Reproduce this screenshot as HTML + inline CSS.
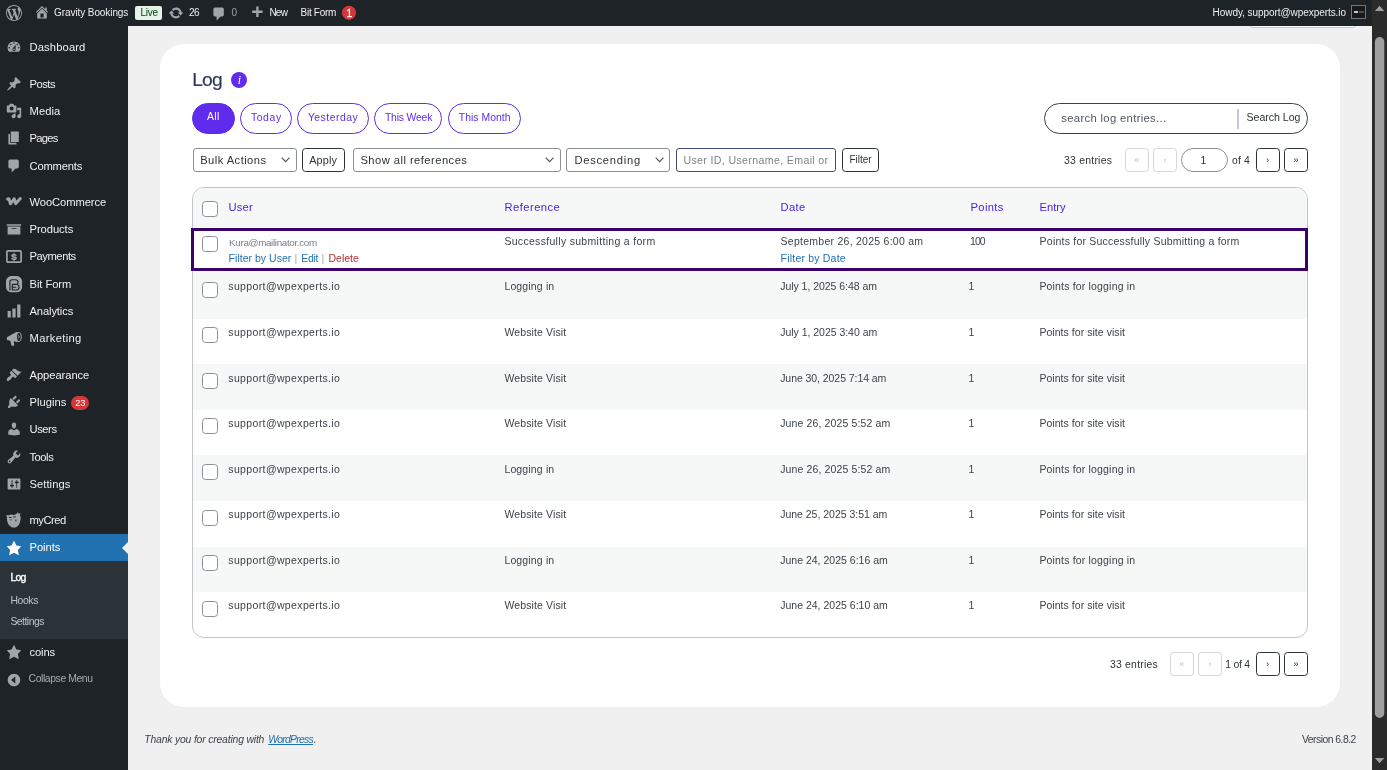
<!DOCTYPE html>
<html lang="en"><head><meta charset="utf-8"><title>Log ‹ Gravity Bookings — WordPress</title>
<style>
html,body{margin:0;padding:0;}
body{width:1387px;height:770px;overflow:hidden;background:#f0f0f1;position:relative;font-family:"Liberation Sans",sans-serif;}
.a{position:absolute;box-sizing:border-box;}
#adminbar{left:0;top:0;width:1372px;height:26px;background:#1d2327;}
#sidebar{left:0;top:26px;width:128px;height:744px;background:#1d2327;}
#active{left:0;top:534px;width:128px;height:27px;background:#2271b1;}
#submenu{left:0;top:561px;width:128px;height:78px;background:#2c3338;}
#notch{left:122px;top:541.5px;width:0;height:0;border-top:6px solid transparent;border-bottom:6px solid transparent;border-right:6px solid #f0f0f1;}
#card{left:160px;top:44px;width:1180px;height:663px;background:#fff;border-radius:24px;}
#sotab{left:1249.5px;top:20px;width:106px;height:8px;background:#fff;border:1px solid #c3c4c7;border-radius:0 0 3px 3px;}
#sbtrack{left:1372px;top:0;width:15px;height:770px;background:#2b2b2b;}
.pill{border:1px solid #5f2ced;border-radius:16px;height:31px;top:103px;background:#fff;}
.pill.on{background:#5f2ced;}
.sel{border:1px solid #8c8f94;border-radius:3px;background:#fff;height:23.5px;top:148.3px;}
.btn{border:1px solid #2c3338;border-radius:3.5px;background:#fff;height:23.5px;top:148.3px;}
.btn.dis{border-color:#d5d6d8;}
.cb{width:16px;height:16px;border:1px solid #8c8f94;border-radius:3.5px;background:#fff;left:201.8px;}
#table{left:192px;top:187px;width:1116px;height:451px;border:1px solid #c3c4c7;border-radius:12px;background:#fff;overflow:hidden;}
.row{left:0;width:1116px;background:#f6f7f7;}
#hl{left:191px;top:228.3px;width:1117px;height:42.5px;border:3px solid #3c0069;background:#fff;}
svg.i{position:absolute;overflow:visible;}
.badge{background:#d63638;border-radius:7px;}
#all{position:absolute;left:0;top:0;width:1387px;height:770px;overflow:hidden;will-change:transform;}

.t{position:absolute;white-space:nowrap;line-height:1;font-family:"Liberation Sans", sans-serif;}
</style></head>
<body>
<div id="all">
<div id="adminbar" class="a"></div>
<div id="sidebar" class="a"></div>
<div id="active" class="a"></div>
<div id="submenu" class="a"></div>
<div id="notch" class="a"></div>
<div id="sotab" class="a"></div>
<div id="adminbar2" class="a" style="left:0;top:0;width:1372px;height:26px;background:#1d2327;"></div>
<div id="card" class="a"></div>
<div id="sbtrack" class="a"></div>
<svg class="i" style="left:1372px;top:0" width="15" height="770" viewBox="0 0 15 770"><rect x="2.900" y="37" width="9.400" height="681" rx="4.700" fill="#9f9f9f"/><path d="M2.900 10.900h9.400L7.600 5.700z" fill="#9f9f9f"/><path d="M2.900 758h9.400L7.600 763.200z" fill="#9f9f9f"/></svg>

<!-- admin bar widgets -->
<div class="a" style="left:135.2px;top:6.4px;width:27px;height:13.4px;background:#e5f2e7;border-radius:2px;"></div>
<svg class="i" style="left:341px;top:5px" width="16" height="16" viewBox="0 0 16 16"><circle cx="7.950" cy="7.850" r="7.050" fill="#d63638"/></svg>
<div class="a" style="left:1351px;top:5px;width:15px;height:14px;border:1px solid #74787d;background:#17191b;"></div>
<div class="a" style="left:1353.5px;top:10.6px;width:4px;height:2.4px;background:#c8c8c8;"></div>
<div class="a" style="left:1358.5px;top:11.2px;width:5px;height:1.4px;background:#4a4d50;"></div>
<!-- plugins badge -->
<div class="a badge" style="left:71.1px;top:396.3px;width:18px;height:13.4px;"></div>

<!-- ICONS -->
<svg class="i" style="left:6.40px;top:4.80px" width="16" height="16" viewBox="0 0 20 20"><path fill="#a0a5aa"  d="M20 10c0-5.510-4.490-10-10-10C4.480 0 0 4.490 0 10c0 5.520 4.480 10 10 10 5.510 0 10-4.480 10-10zM7.780 15.370L4.370 6.220c.55-.02 1.170-.08 1.170-.08.5-.06.44-1.130-.06-1.110 0 0-1.450.11-2.370.11-.18 0-.37 0-.58-.01C4.120 2.690 6.870 1.110 10 1.110c2.330 0 4.450.87 6.050 2.340-.68-.11-1.650.39-1.650 1.580 0 .74.45 1.360.9 2.100.35.61.55 1.360.55 2.460 0 1.490-1.400 5-1.400 5l-3.030-8.370c.54-.02.82-.17.82-.17.5-.05.44-1.250-.06-1.220 0 0-1.440.12-2.380.12-.87 0-2.330-.12-2.330-.12-.5-.03-.56 1.200-.06 1.220l.92.080 1.260 3.410zM17.410 10c.24-.64.74-1.870.43-4.250.7 1.290 1.050 2.710 1.050 4.250 0 3.290-1.730 6.240-4.400 7.780.97-2.590 1.940-5.200 2.920-7.780zM6.100 18.090C3.120 16.650 1.110 13.530 1.110 10c0-1.300.23-2.480.72-3.590C3.250 10.300 4.670 14.200 6.100 18.090zm4.030-6.630l2.580 6.980c-.86.29-1.760.45-2.710.45-.79 0-1.570-.11-2.290-.33.81-2.380 1.620-4.740 2.420-7.100z"/></svg>
<svg class="i" style="left:34.10px;top:4.30px" width="16" height="16" viewBox="0 0 20 20"><path fill="#a0a5aa"  d="M16 8.5l1.530 1.530-1.060 1.060L10 4.620l-6.470 6.470-1.060-1.060L10 2.500l4 4v-2h2v4zm-6-2.460l6 5.990V18H4v-5.970zM12 17v-5H8v5h4z"/></svg>
<svg class="i" style="left:168.00px;top:4.80px" width="16" height="16" viewBox="0 0 20 20"><path fill="#a0a5aa"  d="M10.2 3.28c3.530 0 6.430 2.610 6.920 6h2.080l-3.500 4-3.500-4h2.320c-.45-1.970-2.210-3.450-4.320-3.450-1.450 0-2.730.71-3.540 1.780L4.950 5.660C6.230 4.200 8.110 3.280 10.200 3.280zm-.4 13.440c-3.520 0-6.430-2.610-6.920-6H.8l3.500-4c1.170 1.330 2.330 2.670 3.500 4H5.480c.45 1.970 2.210 3.450 4.320 3.450 1.450 0 2.730-.71 3.540-1.780l1.710 1.950c-1.280 1.460-3.150 2.380-5.250 2.380z"/></svg>
<svg class="i" style="left:210.60px;top:5.60px" width="16" height="16" viewBox="0 0 20 20"><path fill="#a0a5aa"  d="M5 2h9c1.1 0 2 .9 2 2v7c0 1.1-.9 2-2 2h-2l-5 5v-5H5c-1.1 0-2-.9-2-2V4c0-1.1.9-2 2-2z"/></svg>
<svg class="i" style="left:248.90px;top:4.80px" width="16" height="16" viewBox="0 0 20 20"><path fill="#a0a5aa"  d="M17 7v3h-5v5H9v-5H4V7h5V2h3v5h5z"/></svg>
<svg class="i" style="left:6.00px;top:39.30px" width="16" height="16" viewBox="0 0 20 20"><path fill="#a0a5aa"  d="M3.76 16h12.48c1.1-1.37 1.76-3.11 1.76-5 0-4.42-3.58-8-8-8s-8 3.58-8 8c0 1.89.66 3.63 1.76 5zM10 4c.55 0 1 .45 1 1s-.45 1-1 1-1-.45-1-1 .45-1 1-1zM6 6c.55 0 1 .45 1 1s-.45 1-1 1-1-.45-1-1 .45-1 1-1zm8 0c.55 0 1 .45 1 1s-.45 1-1 1-1-.45-1-1 .45-1 1-1zm-5.37 5.55L12 7v6c0 1.1-.9 2-2 2s-2-.9-2-2c0-.57.24-1.08.63-1.45zM4 10c.55 0 1 .45 1 1s-.45 1-1 1-1-.45-1-1 .45-1 1-1zm12 0c.55 0 1 .45 1 1s-.45 1-1 1-1-.45-1-1 .45-1 1-1zm-5 3c0-.55-.45-1-1-1s-1 .45-1 1 .45 1 1 1 1-.45 1-1z"/></svg>
<svg class="i" style="left:6.00px;top:76.00px" width="16" height="16" viewBox="0 0 20 20"><path fill="#a0a5aa"  d="M10.44 3.02l1.82-1.82 6.36 6.35-1.83 1.82c-1.05-.68-2.48-.57-3.41.36l-.75.75c-.92.93-1.04 2.35-.35 3.41l-1.83 1.82-2.41-2.41-2.8 2.79c-.42.42-3.38 2.71-3.8 2.29s1.86-3.39 2.28-3.81l2.79-2.79L4.1 9.36l1.83-1.82c1.05.69 2.48.57 3.4-.36l.75-.75c.93-.92 1.05-2.35.36-3.41z"/></svg>
<svg class="i" style="left:6.00px;top:103.20px" width="16" height="16" viewBox="0 0 20 20"><path fill="#a0a5aa"  d="M13 11V4c0-.55-.45-1-1-1h-1.67L9 1H5L3.67 3H2c-.55 0-1 .45-1 1v7c0 .55.45 1 1 1h10c.55 0 1-.45 1-1zM7 4.5c1.38 0 2.5 1.12 2.5 2.5S8.38 9.5 7 9.5 4.5 8.38 4.5 7 5.62 4.5 7 4.5zM14 6h5v10.5c0 1.38-1.12 2.5-2.5 2.5S14 17.880 14 16.5s1.12-2.5 2.5-2.5c.17 0 .34.02.5.05V9h-3V6zm-4 8.050V13h2v3.500c0 1.380-1.120 2.500-2.500 2.500S7 17.880 7 16.500 8.120 14 9.500 14c.17 0 .34.020.5.050z"/></svg>
<svg class="i" style="left:6.00px;top:130.40px" width="16" height="16" viewBox="0 0 20 20"><path fill="#a0a5aa"  d="M6 15V2h10v13H6zm-1 1h8v2H3V5h2v11z"/></svg>
<svg class="i" style="left:6.00px;top:158.30px" width="16" height="16" viewBox="0 0 20 20"><path fill="#a0a5aa"  d="M5 2h9c1.1 0 2 .9 2 2v7c0 1.1-.9 2-2 2h-2l-5 5v-5H5c-1.1 0-2-.9-2-2V4c0-1.1.9-2 2-2z"/></svg>
<svg class="i" style="left:6.00px;top:221.40px" width="16" height="16" viewBox="0 0 20 20"><path fill="#a0a5aa"  d="M19 4v2H1V4h18zM2 7h16v10H2V7zm11 3V9H7v1h6z"/></svg>
<svg class="i" style="left:6.00px;top:303.00px" width="16" height="16" viewBox="0 0 20 20"><path fill="#a0a5aa"  d="M18 18V2h-4v16h4zm-6 0V7H8v11h4zm-6 0v-8H2v8h4z"/></svg>
<svg class="i" style="left:6.00px;top:367.00px" width="16" height="16" viewBox="0 0 20 20"><path fill="#a0a5aa"  d="M14.48 11.06L7.41 3.99l1.5-1.5c.5-.56 2.3-.47 3.51.32 1.21.8 1.43 1.28 2.91 2.1 1.18.64 2.45 1.26 4.45.85zm-.71.71L6.7 4.7 4.93 6.47c-.39.39-.39 1.02 0 1.41l1.06 1.060c.39.39.39 1.030 0 1.420-.6.6-1.430 1.110-2.210 1.690-.35.26-.7.530-1.010.840C1.430 14.230.4 16.080 1.400 17.070c.99 1 2.840-.030 4.180-1.360.31-.31.580-.660.850-1.020.57-.78 1.080-1.610 1.690-2.210.39-.39 1.020-.39 1.410 0l1.060 1.060c.39.39 1.020.39 1.410 0z"/></svg>
<svg class="i" style="left:6.00px;top:394.40px" width="16" height="16" viewBox="0 0 20 20"><path fill="#a0a5aa"  d="M13.11 4.36L9.87 7.6 8 5.73l3.24-3.24c.35-.34 1.05-.2 1.56.32.52.51.66 1.21.31 1.55zm-8 1.770l.91-1.120 9.010 9.010-1.190.840c-.71.71-2.630 1.160-3.820 1.160H6.140L4.900 17.260c-.59.59-1.540.59-2.120 0-.59-.58-.59-1.530 0-2.120L4 13.900V10.020c0-1.190.45-3.090 1.110-3.890zm7.260 3.970l3.240-3.240c.34-.35 1.040-.21 1.550.31.52.51.66 1.210.31 1.550l-3.240 3.250z"/></svg>
<svg class="i" style="left:6.00px;top:421.40px" width="16" height="16" viewBox="0 0 20 20"><path fill="#a0a5aa"  d="M10 9.25c-2.27 0-2.730-3.440-2.730-3.440C7 4.020 7.820 2 9.970 2c2.160 0 2.980 2.020 2.710 3.810 0 0-.41 3.440-2.680 3.440zm0 2.570L12.720 10c2.390 0 4.520 2.330 4.520 4.530v2.490s-3.650 1.130-7.240 1.130c-3.650 0-7.240-1.130-7.240-1.130v-2.490c0-2.250 1.940-4.480 4.470-4.480z"/></svg>
<svg class="i" style="left:6.00px;top:448.80px" width="16" height="16" viewBox="0 0 20 20"><path fill="#a0a5aa"  d="M16.68 9.77c-1.34 1.34-3.300 1.670-4.950.99l-5.410 6.520c-.99.99-2.590.99-3.580 0s-.99-2.590 0-3.570l6.520-5.420c-.68-1.650-.35-3.610.99-4.950 1.280-1.280 3.120-1.620 4.720-1.060l-2.890 2.890 2.820 2.820 2.860-2.870c.53 1.580.18 3.390-1.080 4.650zM3.810 16.210c.4.39 1.040.39 1.430 0 .4-.4.400-1.040 0-1.430-.39-.4-1.030-.4-1.430 0-.39.39-.39 1.030 0 1.430z"/></svg>
<svg class="i" style="left:6.00px;top:476.00px" width="16" height="16" viewBox="0 0 20 20"><path fill="#a0a5aa"  d="M18 16V4c0-.55-.45-1-1-1H3c-.55 0-1 .45-1 1v12c0 .55.45 1 1 1h14c.55 0 1-.45 1-1zM8 11h1c.55 0 1 .45 1 1s-.45 1-1 1H8v1.500c0 .28-.22.5-.5.5s-.5-.22-.5-.5V13H6c-.55 0-1-.45-1-1s.45-1 1-1h1V5.500c0-.28.22-.5.5-.5s.5.220.5.500V11zm5-2h-1c-.55 0-1-.45-1-1s.45-1 1-1h1V5.500c0-.28.220-.5.500-.5s.500.220.500.500V7h1c.55 0 1 .45 1 1s-.45 1-1 1h-1v5.500c0 .28-.220.500-.500.500s-.500-.220-.500-.500V9z"/></svg>
<svg class="i" style="left:6.00px;top:540.40px" width="16" height="16" viewBox="0 0 20 20"><path fill="#fff"  d="M10 1l3 6 6 .75-4.12 4.620L16 19l-6-3-6 3 1.130-6.630L1 7.750 7 7z"/></svg>
<svg class="i" style="left:6.00px;top:644.40px" width="16" height="16" viewBox="0 0 20 20"><path fill="#a0a5aa"  d="M10 1l3 6 6 .75-4.12 4.620L16 19l-6-3-6 3 1.130-6.630L1 7.750 7 7z"/></svg>
<svg class="i" style="left:6.00px;top:672.40px" width="16" height="16" viewBox="0 0 20 20"><path fill="#a0a5aa"  d="M10 2.160c4.330 0 7.840 3.510 7.840 7.840s-3.510 7.840-7.840 7.840S2.160 14.330 2.160 10 5.670 2.160 10 2.160zM11.600 14.320V5.680L6.400 10z"/></svg>
<svg class="i" style="left:5.8px;top:196.9px" width="16" height="9" viewBox="0 0 16 9"><path fill="none" stroke="#a0a5aa" stroke-width="3" stroke-linecap="round" stroke-linejoin="round" d="M1.600 2.200c.6-.7 1.500-.6 1.700.3l1.100 4.300L8.200 1.800l1.400 4.900 4.700-5.200"/></svg>
<svg class="i" style="left:5.8px;top:250px" width="16" height="13" viewBox="0 0 16 13"><rect x=".9" y=".9" width="14.200" height="11.200" rx="1" fill="none" stroke="#a0a5aa" stroke-width="1.700"/><text x="8" y="10.100" text-anchor="middle" font-family="Liberation Sans, sans-serif" font-weight="700" font-size="9.800" fill="#a0a5aa" stroke="#a0a5aa" stroke-width=".4">$</text></svg>
<svg class="i" style="left:6px;top:275.700px" width="16.100" height="16.300" viewBox="0 0 16 16"><rect width="16" height="16" rx="5.200" fill="#a0a5aa"/><path d="M3.900 13.800V5.700c0-1.200.9-2.100 2.100-2.100h3.300c1.600 0 2.700 1 2.700 2.400 0 1-.6 1.800-1.400 2.100 1.500.3 2.400 1.400 2.400 2.900 0 1.700-1.300 2.800-3.100 2.800H6.300V8.300h3.300M6.300 11.100h3.500" fill="none" stroke="#1d2327" stroke-width="1.150" stroke-linecap="round" stroke-linejoin="round"/></svg>
<svg class="i" style="left:6px;top:331px" width="16" height="16" viewBox="0 0 16 16"><path fill="#a0a5aa" d="M.9 6.300L9.800 1.300c1.200-.5 2.200-.5 2.900-.2v9.800c-.7.300-1.700.1-2.900-.2l-2.100-.4.600 3.800c0 .4-.2.700-.6.700H6c-.3 0-.5-.2-.6-.5L4.300 9.800.9 9.100z"/><ellipse cx="12.900" cy="6" rx="2.300" ry="4.500" fill="#1d2327" stroke="#a0a5aa" stroke-width="1"/><path d="M12.300 4.300c.9.300.9 2.600 0 3.200" fill="none" stroke="#a0a5aa" stroke-width=".9"/></svg>
<svg class="i" style="left:6.400px;top:512.300px" width="15.600" height="16.500" viewBox="0 0 15 16" preserveAspectRatio="none"><path fill="#a0a5aa" d="M.5 2.800l2.200.3 2.300-.7 2.600.5 2.300-.9 1.600-1.700.6 1.500 2-.6-.8 2.500c.7.500 1 1.200.9 2.100l-.5 2.900c-.3 2.300-1.500 4.400-3.300 5.600-1.500 1-3.700 1.100-5.300.3C2.900 13.400 1.500 11.200 1.200 8.800z"/><path d="M2.800 5.300h2.600M6.800 4.700h2.600M4.200 7.600h1.200M9.500 7.300v2M5.500 11.700h.1M6.900 12.500h.1" stroke="#1d2327" stroke-width=".9" fill="none"/></svg>

<!-- title info circle -->
<div class="a" style="left:231.2px;top:71.9px;width:16px;height:16px;border-radius:8px;background:#5f2ced;"></div>

<!-- pills -->
<div class="a pill on" style="left:192px;width:42.6px;"></div>
<div class="a pill" style="left:240px;width:51.6px;"></div>
<div class="a pill" style="left:297px;width:71.8px;"></div>
<div class="a pill" style="left:374.2px;width:68.3px;"></div>
<div class="a pill" style="left:448px;width:72.6px;"></div>

<!-- search -->
<div class="a" style="left:1044px;top:103px;width:264px;height:31px;border:1px solid #3c434a;border-radius:16px;background:#fff;"></div>
<div class="a" style="left:1237.4px;top:109px;width:1.2px;height:20px;background:#c9c2ea;"></div>

<!-- filter row -->
<div class="a sel" style="left:193px;width:103.6px;"></div>
<div class="a btn" style="left:302px;width:42.8px;"></div>
<div class="a sel" style="left:353px;width:207.8px;"></div>
<div class="a sel" style="left:566px;width:103.6px;"></div>
<div class="a sel" style="left:676.3px;width:159.6px;border-color:#3f4c7c;overflow:hidden;"><span style="position:absolute;left:6.1px;top:6.2px;font-size:10.6px;line-height:1;color:#7e8389;white-space:nowrap;letter-spacing:0.36px;">User ID, Username, Email or Reference</span></div>
<div class="a" style="left:831px;top:150px;width:4px;height:20px;background:#fff;"></div>
<div class="a btn" style="left:842px;width:36.8px;"></div>
<!-- chevrons -->
<svg class="i" style="left:280.9px;top:157.4px" width="9.2" height="5.4" viewBox="0 0 9.2 5.4"><path d="M.7.7l3.9 3.9L8.5.7" fill="none" stroke="#50575e" stroke-width="1.2"/></svg>
<svg class="i" style="left:545.2px;top:157.4px" width="9.2" height="5.4" viewBox="0 0 9.2 5.4"><path d="M.7.7l3.9 3.9L8.5.7" fill="none" stroke="#50575e" stroke-width="1.2"/></svg>
<svg class="i" style="left:654.8px;top:157.4px" width="9.2" height="5.4" viewBox="0 0 9.2 5.4"><path d="M.7.7l3.9 3.9L8.5.7" fill="none" stroke="#50575e" stroke-width="1.2"/></svg>

<!-- top pagination -->
<div class="a btn dis" style="left:1125px;width:23.6px;"></div>
<div class="a btn dis" style="left:1153px;width:23.6px;"></div>
<div class="a" style="left:1181px;top:148.3px;width:46.8px;height:23.5px;border:1px solid #8c8f94;border-radius:12px;background:#fff;"></div>
<div class="a btn" style="left:1255.8px;width:24px;"></div>
<div class="a btn" style="left:1283.8px;width:24px;"></div>
<!-- bottom pagination -->
<div class="a btn dis" style="left:1170.2px;top:652.3px;width:23.4px;"></div>
<div class="a btn dis" style="left:1198px;top:652.3px;width:23.6px;"></div>
<div class="a btn" style="left:1256px;top:652.3px;width:23.7px;"></div>
<div class="a btn" style="left:1284px;top:652.3px;width:23.7px;"></div>

<!-- table -->
<div id="table" class="a">
  <div class="a row" style="top:0;height:39px;"></div>
  <div class="a row" style="top:83px;height:47.6px;"></div>
  <div class="a row" style="top:176.2px;height:45.6px;"></div>
  <div class="a row" style="top:267.4px;height:45.6px;"></div>
  <div class="a row" style="top:358.6px;height:45.6px;"></div>
</div>
<div id="hl" class="a"></div>
<div class="a cb" style="top:201px;"></div>
<div class="a cb" style="top:236px;"></div>
<div class="a cb" style="top:282px;"></div>
<div class="a cb" style="top:327px;"></div>
<div class="a cb" style="top:373px;"></div>
<div class="a cb" style="top:418px;"></div>
<div class="a cb" style="top:464px;"></div>
<div class="a cb" style="top:510px;"></div>
<div class="a cb" style="top:555px;"></div>
<div class="a cb" style="top:601px;"></div>

<div id="texts">
<span class="t" style="font-size:10.0px;color:#f0f0f1;letter-spacing:-0.090px;left:54.10px;top:8.00px;">Gravity Bookings</span>
<span class="t" style="font-size:10.0px;color:#00450c;letter-spacing:-0.303px;left:140.60px;top:8.00px;">Live</span>
<span class="t" style="font-size:10.0px;color:#f0f0f1;letter-spacing:-0.483px;left:188.90px;top:8.00px;">26</span>
<span class="t" style="font-size:10.0px;color:#9ca2a7;left:231.42px;top:8.00px;">0</span>
<span class="t" style="font-size:10.0px;color:#f0f0f1;letter-spacing:-0.766px;left:269.40px;top:8.00px;">New</span>
<span class="t" style="font-size:10.0px;color:#f0f0f1;letter-spacing:-0.304px;left:300.60px;top:8.00px;">Bit Form</span>
<span class="t" style="font-size:10px;color:#fff;-webkit-text-stroke:0.3px #fff;left:346.62px;top:9.00px;">1</span>
<span class="t" style="font-size:10.0px;color:#f0f0f1;letter-spacing:-0.062px;left:1212.60px;top:8.00px;">Howdy, support@wpexperts.io</span>
<span class="t" style="font-size:11.2px;color:#f0f0f1;letter-spacing:0.137px;left:29.50px;top:42.00px;">Dashboard</span>
<span class="t" style="font-size:11.2px;color:#f0f0f1;letter-spacing:-0.485px;left:29.50px;top:79.00px;">Posts</span>
<span class="t" style="font-size:11.2px;color:#f0f0f1;letter-spacing:0.092px;left:29.50px;top:106.00px;">Media</span>
<span class="t" style="font-size:11.2px;color:#f0f0f1;letter-spacing:-0.697px;left:29.50px;top:133.00px;">Pages</span>
<span class="t" style="font-size:11.2px;color:#f0f0f1;letter-spacing:-0.186px;left:29.50px;top:161.00px;">Comments</span>
<span class="t" style="font-size:11.2px;color:#f0f0f1;letter-spacing:-0.078px;left:29.50px;top:197.00px;">WooCommerce</span>
<span class="t" style="font-size:11.2px;color:#f0f0f1;letter-spacing:-0.061px;left:29.50px;top:224.00px;">Products</span>
<span class="t" style="font-size:11.2px;color:#f0f0f1;letter-spacing:-0.433px;left:29.50px;top:251.00px;">Payments</span>
<span class="t" style="font-size:11.2px;color:#f0f0f1;letter-spacing:-0.062px;left:29.50px;top:279.00px;">Bit Form</span>
<span class="t" style="font-size:11.2px;color:#f0f0f1;letter-spacing:-0.127px;left:29.50px;top:306.00px;">Analytics</span>
<span class="t" style="font-size:11.2px;color:#f0f0f1;letter-spacing:0.326px;left:29.50px;top:333.00px;">Marketing</span>
<span class="t" style="font-size:11.2px;color:#f0f0f1;letter-spacing:-0.057px;left:29.50px;top:370.00px;">Appearance</span>
<span class="t" style="font-size:11.2px;color:#f0f0f1;letter-spacing:0.030px;left:29.50px;top:397.00px;">Plugins</span>
<span class="t" style="font-size:11.2px;color:#f0f0f1;letter-spacing:-0.426px;left:29.50px;top:424.00px;">Users</span>
<span class="t" style="font-size:11.2px;color:#f0f0f1;letter-spacing:-0.472px;left:29.50px;top:452.00px;">Tools</span>
<span class="t" style="font-size:11.2px;color:#f0f0f1;letter-spacing:0.048px;left:29.50px;top:479.00px;">Settings</span>
<span class="t" style="font-size:11.2px;color:#f0f0f1;letter-spacing:-0.486px;left:29.50px;top:515.00px;">myCred</span>
<span class="t" style="font-size:11.2px;color:#fff;letter-spacing:-0.053px;left:29.50px;top:542.00px;">Points</span>
<span class="t" style="font-size:11.2px;color:#f0f0f1;letter-spacing:-0.117px;left:29.50px;top:647.00px;">coins</span>
<span class="t" style="font-size:9.3px;color:#fff;letter-spacing:-0.229px;left:75.20px;top:399.00px;">23</span>
<span class="t" style="font-size:10.4px;color:#fff;letter-spacing:-0.698px;-webkit-text-stroke:0.35px #fff;left:10.40px;top:573.00px;">Log</span>
<span class="t" style="font-size:10.4px;color:#c0c4c8;letter-spacing:-0.367px;left:10.40px;top:596.00px;">Hooks</span>
<span class="t" style="font-size:10.4px;color:#c0c4c8;letter-spacing:-0.500px;left:10.40px;top:617.00px;">Settings</span>
<span class="t" style="font-size:10.4px;color:#a7aaad;letter-spacing:-0.409px;left:28.60px;top:674.00px;">Collapse Menu</span>
<span class="t" style="font-size:19.2px;color:#2d3a5e;letter-spacing:-0.846px;-webkit-text-stroke:0.2px #2d3a5e;left:192.30px;top:70.00px;">Log</span>
<span class="t" style="font-size:12px;color:#fff;font-style:italic;font-family:'Liberation Serif',serif;left:237.83px;top:74.00px;">i</span>
<span class="t" style="font-size:10.4px;color:#fff;letter-spacing:0.375px;left:206.90px;top:112.00px;">All</span>
<span class="t" style="font-size:10.4px;color:#5f2ced;letter-spacing:0.615px;left:250.90px;top:113.00px;">Today</span>
<span class="t" style="font-size:10.4px;color:#5f2ced;letter-spacing:0.489px;left:307.90px;top:113.00px;">Yesterday</span>
<span class="t" style="font-size:10.4px;color:#5f2ced;letter-spacing:-0.175px;left:384.90px;top:113.00px;">This Week</span>
<span class="t" style="font-size:10.4px;color:#5f2ced;letter-spacing:0.041px;left:458.80px;top:113.00px;">This Month</span>
<span class="t" style="font-size:11.3px;color:#50575e;letter-spacing:0.312px;left:1061.30px;top:113.00px;">search log entries...</span>
<span class="t" style="font-size:10.6px;color:#2c3338;letter-spacing:-0.020px;left:1246.50px;top:112.00px;">Search Log</span>
<span class="t" style="font-size:11.2px;color:#2c3338;letter-spacing:0.448px;left:200.20px;top:155.00px;">Bulk Actions</span>
<span class="t" style="font-size:10.9px;color:#2c3338;letter-spacing:0.122px;left:309.20px;top:155.00px;">Apply</span>
<span class="t" style="font-size:11.2px;color:#2c3338;letter-spacing:0.461px;left:360.40px;top:155.00px;">Show all references</span>
<span class="t" style="font-size:11.2px;color:#2c3338;letter-spacing:0.738px;left:574.40px;top:155.00px;">Descending</span>
<span class="t" style="font-size:10px;color:#2c3338;letter-spacing:-0.006px;left:849.50px;top:155.00px;">Filter</span>
<span class="t" style="font-size:10.4px;color:#2c3338;letter-spacing:0.248px;left:1064.00px;top:156.00px;">33 entries</span>
<span class="t" style="font-size:10.4px;color:#2c3338;left:1200.61px;top:156.00px;">1</span>
<span class="t" style="font-size:10.4px;color:#2c3338;letter-spacing:0.216px;left:1231.90px;top:156.00px;">of 4</span>
<span class="t" style="font-size:9px;color:#b4b8bc;left:1134.29px;top:156.00px;">«</span>
<span class="t" style="font-size:9px;color:#b4b8bc;left:1163.40px;top:156.00px;">‹</span>
<span class="t" style="font-size:9.5px;color:#2c3338;left:1266.01px;top:155.00px;">›</span>
<span class="t" style="font-size:9.5px;color:#2c3338;left:1293.15px;top:155.00px;">»</span>
<span class="t" style="font-size:11.2px;color:#4f1fe6;letter-spacing:0.164px;left:228.60px;top:202.00px;">User</span>
<span class="t" style="font-size:11.2px;color:#4f1fe6;letter-spacing:0.479px;left:504.40px;top:202.00px;">Reference</span>
<span class="t" style="font-size:11.2px;color:#4f1fe6;letter-spacing:0.303px;left:780.60px;top:202.00px;">Date</span>
<span class="t" style="font-size:11.2px;color:#4f1fe6;letter-spacing:0.310px;left:970.60px;top:202.00px;">Points</span>
<span class="t" style="font-size:11.2px;color:#4f1fe6;letter-spacing:0.017px;left:1039.50px;top:202.00px;">Entry</span>
<span class="t" style="font-size:9.8px;color:#7a7d82;letter-spacing:-0.320px;left:229.10px;top:238.00px;">Kura@mailinator.com</span>
<span class="t" style="font-size:10.5px;color:#2271b1;letter-spacing:0.019px;left:228.60px;top:253.00px;">Filter by User</span>
<span class="t" style="font-size:10.5px;color:#a7aaad;left:294.58px;top:253.00px;">|</span>
<span class="t" style="font-size:10.5px;color:#2271b1;letter-spacing:-0.312px;left:301.30px;top:253.00px;">Edit</span>
<span class="t" style="font-size:10.5px;color:#a7aaad;left:321.58px;top:253.00px;">|</span>
<span class="t" style="font-size:10.5px;color:#b32d2e;letter-spacing:-0.011px;left:328.50px;top:253.00px;">Delete</span>
<span class="t" style="font-size:10.5px;color:#3c434a;letter-spacing:0.308px;left:504.40px;top:236.00px;">Successfully submitting a form</span>
<span class="t" style="font-size:10.5px;color:#3c434a;letter-spacing:0.258px;left:780.60px;top:236.00px;">September 26, 2025 6:00 am</span>
<span class="t" style="font-size:10.5px;color:#2271b1;letter-spacing:0.197px;left:780.60px;top:253.00px;">Filter by Date</span>
<span class="t" style="font-size:10.5px;color:#3c434a;letter-spacing:-1.053px;left:970.10px;top:236.00px;">100</span>
<span class="t" style="font-size:10.5px;color:#3c434a;letter-spacing:0.222px;left:1039.60px;top:236.00px;">Points for Successfully Submitting a form</span>
<span class="t" style="font-size:10.5px;color:#3c434a;letter-spacing:0.367px;left:228.30px;top:281.00px;">support@wpexperts.io</span>
<span class="t" style="font-size:10.5px;color:#3c434a;letter-spacing:0.151px;left:504.40px;top:281.00px;">Logging in</span>
<span class="t" style="font-size:10.5px;color:#3c434a;letter-spacing:-0.035px;left:780.20px;top:281.00px;">July 1, 2025 6:48 am</span>
<span class="t" style="font-size:10.5px;color:#3c434a;left:968.38px;top:281.00px;">1</span>
<span class="t" style="font-size:10.5px;color:#3c434a;letter-spacing:0.174px;left:1039.40px;top:281.00px;">Points for logging in</span>
<span class="t" style="font-size:10.5px;color:#3c434a;letter-spacing:0.367px;left:228.30px;top:327.00px;">support@wpexperts.io</span>
<span class="t" style="font-size:10.5px;color:#3c434a;letter-spacing:0.119px;left:504.40px;top:327.00px;">Website Visit</span>
<span class="t" style="font-size:10.5px;color:#3c434a;letter-spacing:-0.025px;left:780.20px;top:327.00px;">July 1, 2025 3:40 am</span>
<span class="t" style="font-size:10.5px;color:#3c434a;left:968.38px;top:327.00px;">1</span>
<span class="t" style="font-size:10.5px;color:#3c434a;letter-spacing:0.048px;left:1039.40px;top:327.00px;">Points for site visit</span>
<span class="t" style="font-size:10.5px;color:#3c434a;letter-spacing:0.367px;left:228.30px;top:373.00px;">support@wpexperts.io</span>
<span class="t" style="font-size:10.5px;color:#3c434a;letter-spacing:0.119px;left:504.40px;top:373.00px;">Website Visit</span>
<span class="t" style="font-size:10.5px;color:#3c434a;letter-spacing:-0.064px;left:780.20px;top:373.00px;">June 30, 2025 7:14 am</span>
<span class="t" style="font-size:10.5px;color:#3c434a;left:968.38px;top:373.00px;">1</span>
<span class="t" style="font-size:10.5px;color:#3c434a;letter-spacing:0.048px;left:1039.40px;top:373.00px;">Points for site visit</span>
<span class="t" style="font-size:10.5px;color:#3c434a;letter-spacing:0.367px;left:228.30px;top:418.00px;">support@wpexperts.io</span>
<span class="t" style="font-size:10.5px;color:#3c434a;letter-spacing:0.119px;left:504.40px;top:418.00px;">Website Visit</span>
<span class="t" style="font-size:10.5px;color:#3c434a;letter-spacing:0.131px;left:780.20px;top:418.00px;">June 26, 2025 5:52 am</span>
<span class="t" style="font-size:10.5px;color:#3c434a;left:968.38px;top:418.00px;">1</span>
<span class="t" style="font-size:10.5px;color:#3c434a;letter-spacing:0.048px;left:1039.40px;top:418.00px;">Points for site visit</span>
<span class="t" style="font-size:10.5px;color:#3c434a;letter-spacing:0.367px;left:228.30px;top:464.00px;">support@wpexperts.io</span>
<span class="t" style="font-size:10.5px;color:#3c434a;letter-spacing:0.151px;left:504.40px;top:464.00px;">Logging in</span>
<span class="t" style="font-size:10.5px;color:#3c434a;letter-spacing:0.131px;left:780.20px;top:464.00px;">June 26, 2025 5:52 am</span>
<span class="t" style="font-size:10.5px;color:#3c434a;left:968.38px;top:464.00px;">1</span>
<span class="t" style="font-size:10.5px;color:#3c434a;letter-spacing:0.174px;left:1039.40px;top:464.00px;">Points for logging in</span>
<span class="t" style="font-size:10.5px;color:#3c434a;letter-spacing:0.367px;left:228.30px;top:509.00px;">support@wpexperts.io</span>
<span class="t" style="font-size:10.5px;color:#3c434a;letter-spacing:0.119px;left:504.40px;top:509.00px;">Website Visit</span>
<span class="t" style="font-size:10.5px;color:#3c434a;letter-spacing:-0.016px;left:780.20px;top:509.00px;">June 25, 2025 3:51 am</span>
<span class="t" style="font-size:10.5px;color:#3c434a;left:968.38px;top:509.00px;">1</span>
<span class="t" style="font-size:10.5px;color:#3c434a;letter-spacing:0.048px;left:1039.40px;top:509.00px;">Points for site visit</span>
<span class="t" style="font-size:10.5px;color:#3c434a;letter-spacing:0.367px;left:228.30px;top:555.00px;">support@wpexperts.io</span>
<span class="t" style="font-size:10.5px;color:#3c434a;letter-spacing:0.151px;left:504.40px;top:555.00px;">Logging in</span>
<span class="t" style="font-size:10.5px;color:#3c434a;letter-spacing:0.009px;left:780.20px;top:555.00px;">June 24, 2025 6:16 am</span>
<span class="t" style="font-size:10.5px;color:#3c434a;left:968.38px;top:555.00px;">1</span>
<span class="t" style="font-size:10.5px;color:#3c434a;letter-spacing:0.174px;left:1039.40px;top:555.00px;">Points for logging in</span>
<span class="t" style="font-size:10.5px;color:#3c434a;letter-spacing:0.367px;left:228.30px;top:600.00px;">support@wpexperts.io</span>
<span class="t" style="font-size:10.5px;color:#3c434a;letter-spacing:0.119px;left:504.40px;top:600.00px;">Website Visit</span>
<span class="t" style="font-size:10.5px;color:#3c434a;letter-spacing:0.009px;left:780.20px;top:600.00px;">June 24, 2025 6:10 am</span>
<span class="t" style="font-size:10.5px;color:#3c434a;left:968.38px;top:600.00px;">1</span>
<span class="t" style="font-size:10.5px;color:#3c434a;letter-spacing:0.048px;left:1039.40px;top:600.00px;">Points for site visit</span>
<span class="t" style="font-size:10.4px;color:#2c3338;letter-spacing:0.248px;left:1109.90px;top:660.00px;">33 entries</span>
<span class="t" style="font-size:10.4px;color:#2c3338;letter-spacing:-0.255px;left:1225.30px;top:660.00px;">1 of 4</span>
<span class="t" style="font-size:9px;color:#b4b8bc;left:1179.34px;top:660.00px;">«</span>
<span class="t" style="font-size:9px;color:#b4b8bc;left:1208.40px;top:660.00px;">‹</span>
<span class="t" style="font-size:9.5px;color:#2c3338;left:1266.01px;top:659.00px;">›</span>
<span class="t" style="font-size:9.5px;color:#2c3338;left:1293.15px;top:659.00px;">»</span>
<span class="t" style="font-size:10.4px;color:#3c434a;font-style:italic;letter-spacing:-0.179px;left:144.30px;top:735.00px;">Thank you for creating with</span>
<span class="t" style="font-size:10.4px;color:#2271b1;font-style:italic;letter-spacing:-0.728px;text-decoration:underline;left:268.20px;top:735.00px;">WordPress</span>
<span class="t" style="font-size:10.4px;color:#3c434a;font-style:italic;left:313.70px;top:735.00px;">.</span>
<span class="t" style="font-size:10.4px;color:#3c434a;letter-spacing:-0.532px;left:1302.00px;top:735.00px;">Version 6.8.2</span>
</div>
</div>
</body></html>
